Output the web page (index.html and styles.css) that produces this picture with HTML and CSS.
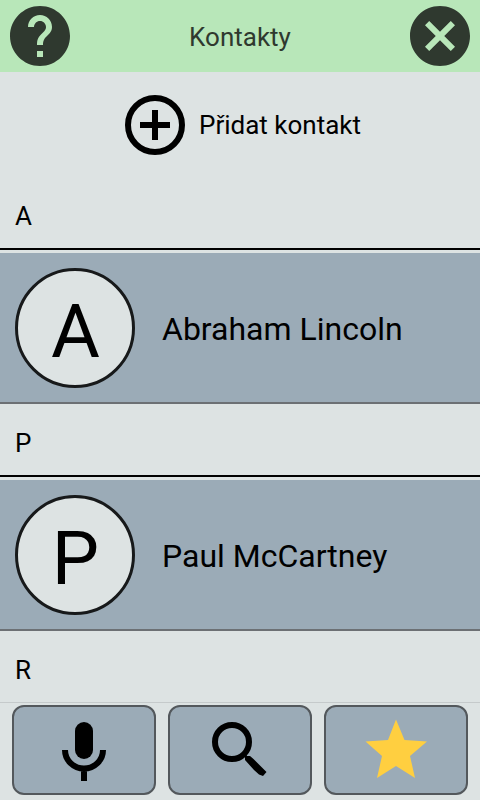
FILE: index.html
```html
<!DOCTYPE html>
<html lang="cs">
<head>
<meta charset="utf-8">
<title>Kontakty</title>
<link rel="stylesheet" href="styles.css">
</head>
<body>
<div class="app">
  <header class="topbar">
    <svg class="topbar-icon" viewBox="2 2 20 20"><path d="M12 2C6.48 2 2 6.48 2 12s4.480 10 10 10 10-4.480 10-10S17.520 2 12 2zm1 17h-2v-2h2v2zm2.070-7.750l-.9.920C13.450 12.900 13 13.500 13 15h-2v-.5c0-1.100.45-2.100 1.170-2.830l1.240-1.260c.37-.36.59-.86.59-1.410 0-1.100-.9-2-2-2s-2 .9-2 2H8c0-2.210 1.790-4 4-4s4 1.790 4 4c0 .88-.36 1.680-.93 2.250z"/></svg>
    <h1 class="title">Kontakty</h1>
    <svg class="topbar-icon" viewBox="2 2 20 20"><path d="M12 2C6.470 2 2 6.470 2 12s4.470 10 10 10 10-4.470 10-10S17.530 2 12 2zm5 13.590L15.590 17 12 13.410 8.410 17 7 15.590 10.590 12 7 8.410 8.410 7 12 10.590 15.590 7 17 8.410 13.410 12 17 15.590z"/></svg>
  </header>
  <main class="list">
    <div class="add">
      <svg class="add-icon" viewBox="0 0 60 60"><circle cx="30" cy="30" r="27"/><path d="M30 15v30M15 30h30"/></svg>
      <span>Přidat kontakt</span>
    </div>
    <div class="section">A</div>
    <div class="contact"><div class="avatar"><span>A</span></div><div class="name">Abraham Lincoln</div></div>
    <div class="section">P</div>
    <div class="contact"><div class="avatar"><span>P</span></div><div class="name">Paul McCartney</div></div>
    <div class="section">R</div>
  </main>
  <nav class="toolbar">
    <div class="button"><svg viewBox="0 0 72 72"><rect x="27" y="8" width="18" height="37" rx="9"/><path class="line" d="M17 36a19 18.500 0 0 0 38 0M36 54v13"/></svg></div>
    <div class="button"><svg viewBox="0 0 72 72"><circle class="line" cx="28" cy="28" r="17"/><path d="M41 39l2 3h3l3.500 3 8.500 8.500 4.500 4.500-3.500 4-4-1.500-5-4.500-9-10v-3l-3-2z"/></svg></div>
    <div class="button"><svg viewBox="0 0 72 72"><path class="star" d="M36 5.500l8.500 20.500 22.500 1.500-17 14.500 5 22-19-12-19 12 5-22L5.500 27.500l22.500-1.500z"/></svg></div>
  </nav>
</div>
</body>
</html>
```
FILE: styles.css
```css
* {
  box-sizing: border-box;
}

body {
  margin: 0;
  background: #dde3e3;
  color: #000;
  font: 26px/30px Roboto, sans-serif;
}

.app {
  display: flex;
  flex-direction: column;
  height: 800px;
  overflow: hidden;
}

svg {
  display: block;
}

.topbar {
  display: flex;
  flex: none;
  align-items: center;
  justify-content: space-between;
  height: 72px;
  padding: 0 10px;
  background: #b8e7b9;
  color: #2f392f;
}

.topbar-icon {
  width: 60px;
  height: 60px;
  fill: #2f392f;
}

.title {
  margin: 0;
  padding-top: 2px;
  font-size: 26px;
  font-weight: 400;
}

.list {
  flex: 1;
  min-height: 0;
  overflow: hidden;
}

.add {
  display: flex;
  align-items: center;
  gap: 14px;
  height: 105px;
  padding: 0 0 0 125px;
}

.add-icon {
  width: 60px;
  height: 60px;
  fill: none;
  stroke: #000;
  stroke-width: 6;
}

.section {
  height: 73px;
  margin-bottom: 3px;
  padding: 24px 15px 0;
  border-bottom: 2px solid #000;
}

.contact {
  display: flex;
  align-items: center;
  height: 151px;
  padding-left: 15px;
  background: #9babb7;
  border-bottom: 2px solid #6c7074;
}

.avatar {
  display: flex;
  align-items: center;
  justify-content: center;
  width: 120px;
  height: 120px;
  padding: 7px 0 0 1px;
  border: 3px solid #17191a;
  border-radius: 50%;
  background: #dde3e3;
  font-size: 75px;
  line-height: 88px;
}

.name {
  margin-left: 27px;
  padding-top: 2px;
  font-size: 32px;
  line-height: 38px;
}

.toolbar {
  display: flex;
  flex: none;
  gap: 12px;
  height: 98px;
  padding: 2px 12px 5px;
  border-top: 1px solid #c5cacb;
  background: #dde3e3;
}

.button {
  display: flex;
  flex: 1;
  align-items: center;
  justify-content: center;
  border: 2px solid #53585c;
  border-radius: 12px;
  background: #9babb7;
}

.button svg {
  width: 72px;
  height: 72px;
}

.line {
  fill: none;
  stroke: #000;
  stroke-width: 6;
}

.star {
  fill: #ffcf40;
}
```
